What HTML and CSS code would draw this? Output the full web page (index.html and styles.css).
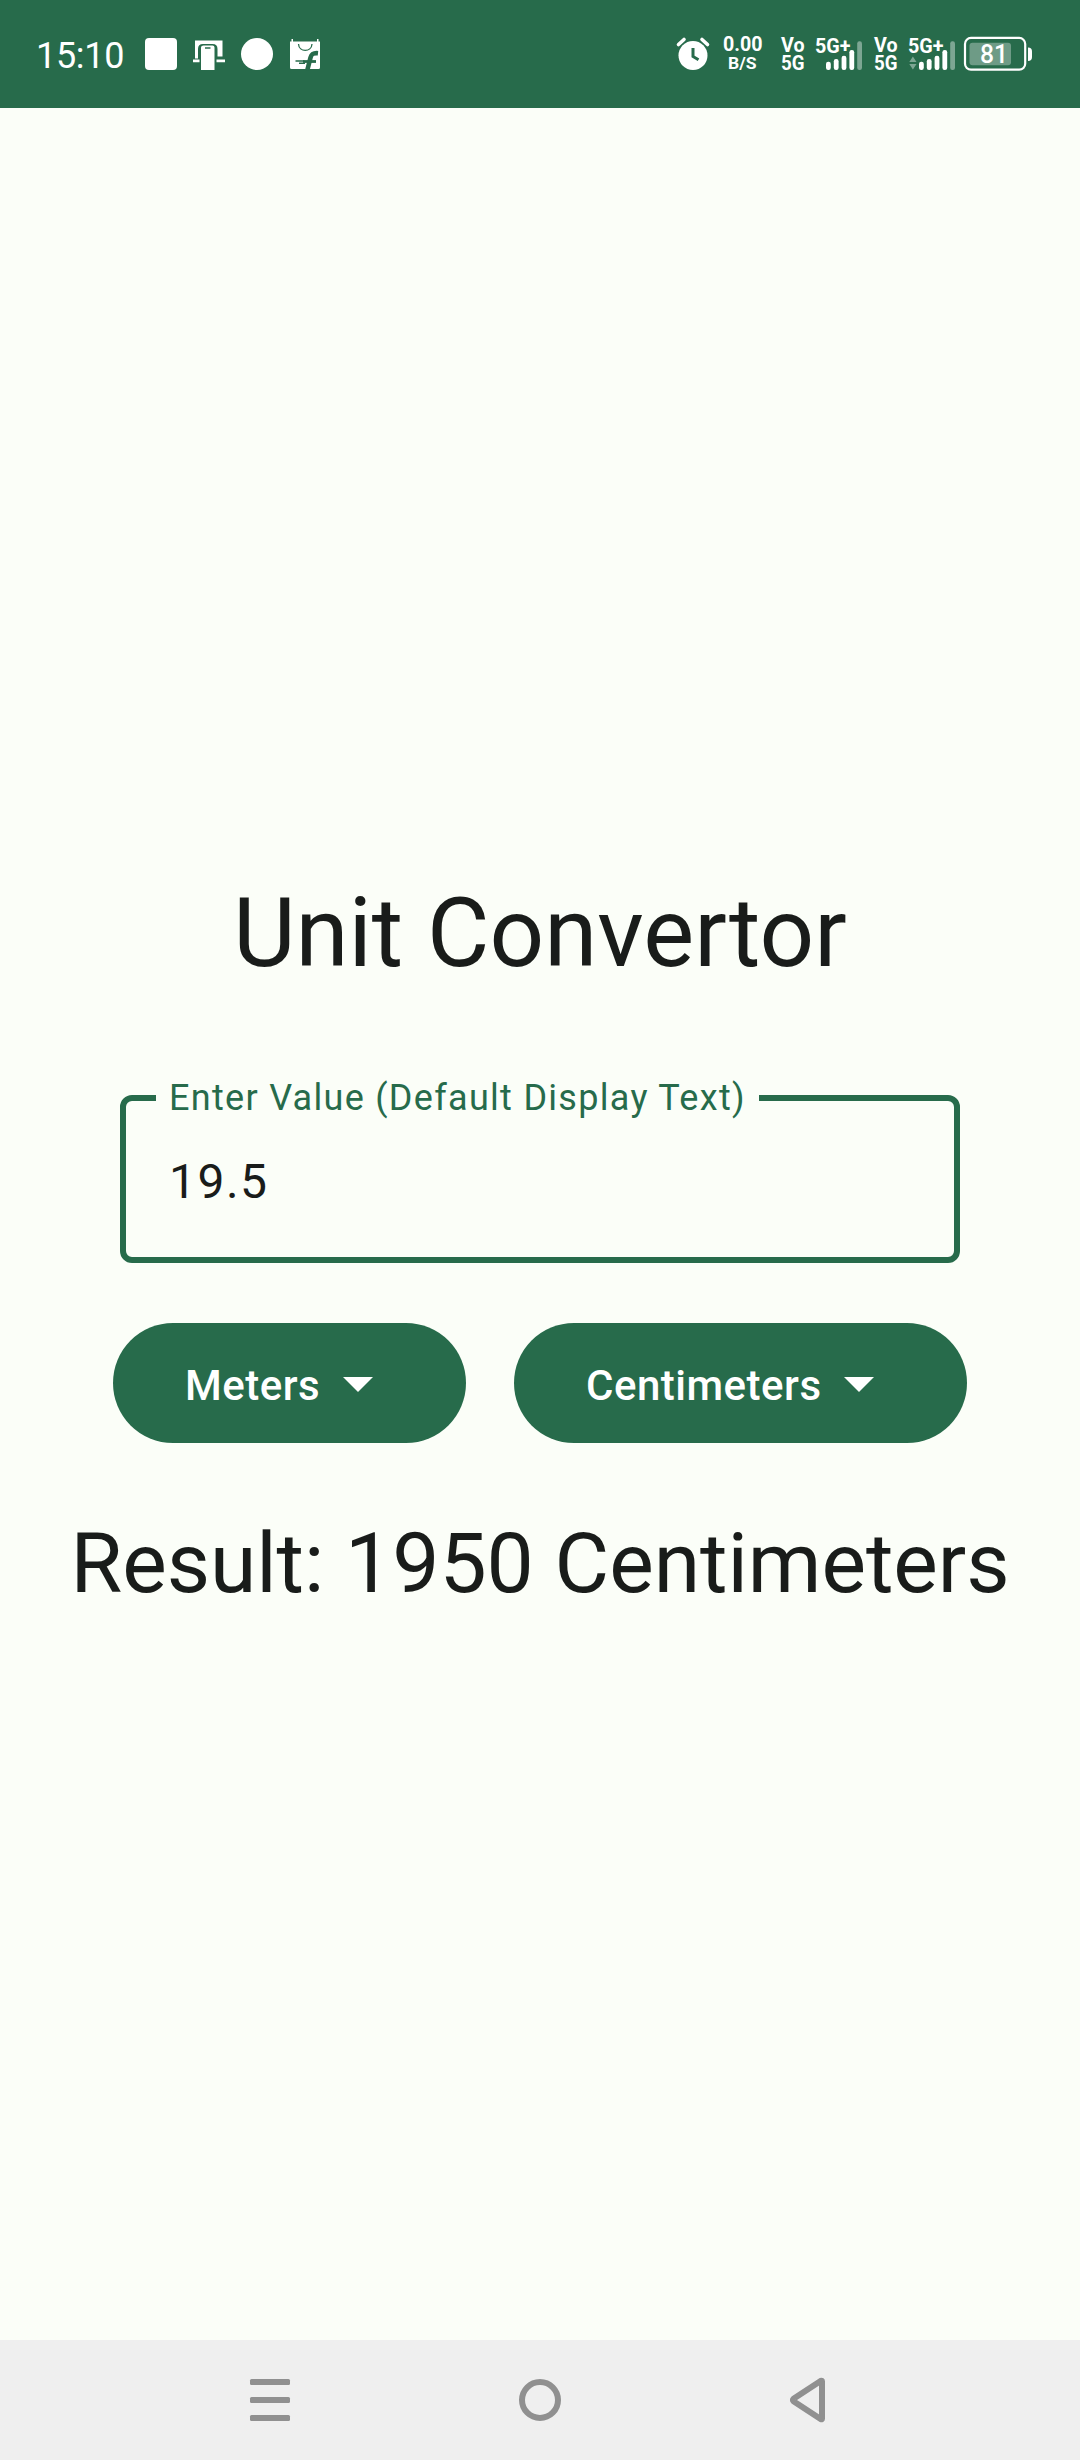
FILE: index.html
```html
<!DOCTYPE html>
<html lang="en">
<head>
<meta charset="utf-8">
<title>Unit Convertor</title>
<link rel="stylesheet" href="styles.css">
</head>
<body>
<div class="screen">
  <header class="status">
    <span class="clock">15:10</span>
    <svg class="notifications" width="176" height="36" viewBox="145 36 176 36" fill="#fff">
      <rect x="145" y="38" width="32" height="32" rx="4"/>
      <path d="M195 40.500h27.500v16h-5V49q0-5-5-5h-9.500q-5 0-5 5v9.500h-3z"/>
      <path d="M193 59.500h6.500v2.700H193zM216.500 59.500h8.500v2.700h-8.500z"/>
      <path fill-rule="evenodd" d="M203.500 45.500h9q2 0 2 2V70H201V47.500q0-2 2.500-2zM205 47.300v1.500h5.500v-1.500z"/>
      <circle cx="257" cy="54" r="16"/>
      <path d="M290 41.500h30V67.500q0 1.500-1.500 1.500h-27q-1.500 0-1.500-1.500zM291.500 39h1.500v3h-1.500zM317 39h1.500v3H317z"/>
      <g fill="none" stroke="#276b4b">
        <path stroke-width="1.300" d="M298.500 44c.5 8.500 13 8.500 13.500 0"/>
        <path stroke-width="4.600" d="M318 53.200c-5-.5-6.500 1-7.500 4.500l-3.200 12.500"/>
        <path stroke-width="2.800" d="M303 61.500h13"/>
        <path stroke-width="1.400" d="M295.500 61h9M299 63.300h6"/>
      </g>
    </svg>
    <svg class="indicators" width="358" height="36" viewBox="676 36 358 36" fill="#fff">
      <circle cx="693" cy="55.500" r="14.500"/>
      <path d="M678.500 44.500l5.500-5M702 39.500l5.500 5" stroke="#fff" stroke-width="3.600" stroke-linecap="round"/>
      <path d="M693 48v8.500l5.500 3.300" fill="none" stroke="#276b4b" stroke-width="3"/>
      <g class="cell">
        <text x="723" y="51" font-size="20.500" textLength="39.500" lengthAdjust="spacingAndGlyphs">0.00</text>
        <text x="728" y="69" font-size="17" textLength="28.500" lengthAdjust="spacingAndGlyphs">B/S</text>
        <text x="781" y="52" font-size="19.500" textLength="23.500" lengthAdjust="spacingAndGlyphs">Vo</text>
        <text x="781" y="69.700" font-size="19.500" textLength="23.500" lengthAdjust="spacingAndGlyphs">5G</text>
        <text x="815" y="53.300" font-size="20.500" textLength="35.500" lengthAdjust="spacingAndGlyphs">5G+</text>
        <text x="874" y="52" font-size="19.500" textLength="23.500" lengthAdjust="spacingAndGlyphs">Vo</text>
        <text x="874" y="69.700" font-size="19.500" textLength="23.500" lengthAdjust="spacingAndGlyphs">5G</text>
        <text x="908" y="53.300" font-size="20.500" textLength="35.500" lengthAdjust="spacingAndGlyphs">5G+</text>
      </g>
      <g id="bars">
        <rect x="826" y="61.700" width="4.800" height="8.300" rx="2.200"/>
        <rect x="833.800" y="59" width="4.800" height="11" rx="2.200"/>
        <rect x="841.600" y="55.700" width="4.800" height="14.300" rx="2.200"/>
        <rect x="849.400" y="50" width="4.800" height="20" rx="2.200"/>
        <rect x="857.200" y="41.300" width="4.800" height="28.700" rx="2.200" opacity=".4"/>
      </g>
      <use href="#bars" x="93"/>
      <path d="M909.300 62l3.600-5.500 3.600 5.500zM909.300 64h7.200l-3.600 5.500z" opacity=".4"/>
      <rect x="965" y="37.900" width="60.200" height="31.800" rx="6" fill="none" stroke="#fff" stroke-width="2.200"/>
      <rect x="969.500" y="42.700" width="41.500" height="22.500" rx="3" opacity=".33"/>
      <path d="M1028 47.500q4 0 4 4v5.500q0 4-4 4z"/>
      <text x="980" y="63" font-size="25.500" font-weight="500" textLength="28" lengthAdjust="spacingAndGlyphs">81</text>
    </svg>
  </header>

  <main class="content">
    <h1 class="title">Unit Convertor</h1>
    <fieldset class="field">
      <legend class="label">Enter Value (Default Display Text)</legend>
      <div class="value">19.5</div>
    </fieldset>
    <div class="units">
      <button class="unit">Meters
        <svg width="72" height="72" viewBox="0 0 24 24" fill="#fff"><path d="M7 10l5 5 5-5z"/></svg>
      </button>
      <button class="unit">Centimeters
        <svg width="72" height="72" viewBox="0 0 24 24" fill="#fff"><path d="M7 10l5 5 5-5z"/></svg>
      </button>
    </div>
    <p class="result">Result: 1950 Centimeters</p>
  </main>

  <nav class="navbar">
    <svg width="48" height="48" viewBox="0 0 48 48" fill="#909090">
      <rect x="4" y="3" width="40" height="6" rx="1.500"/><rect x="4" y="21" width="40" height="6" rx="1.500"/><rect x="4" y="39" width="40" height="6" rx="1.500"/>
    </svg>
    <svg width="48" height="48" viewBox="0 0 48 48" fill="none" stroke="#909090" stroke-width="6"><circle cx="24" cy="24" r="18"/></svg>
    <svg width="48" height="48" viewBox="0 0 48 48" fill="none" stroke="#909090" stroke-width="6" stroke-linejoin="round"><path d="M7.500 22.800L35 4.800q1-.5 1 .7v37q0 1.200-1 .7L7.500 25.200q-1.200-1.200 0-2.400z"/></svg>
  </nav>
</div>
</body>
</html>
```
FILE: styles.css
```css
* {
  box-sizing: border-box;
}

body {
  margin: 0;
  font-family: Roboto, "Noto Sans", sans-serif;
  color: #191c1a;
  background: #fbfef8;
}

.screen {
  display: flex;
  flex-direction: column;
  width: 1080px;
  height: 2460px;
}

.status {
  display: flex;
  justify-content: space-between;
  height: 108px;
  padding: 0 46px 0 36px;
  color: #fff;
  background: #276b4b;
}

.status svg {
  margin-top: 36px;
  overflow: visible;
}

.clock {
  width: 90px;
  font-size: 36px;
  line-height: 112px;
  letter-spacing: -0.3px;
}

.notifications {
  margin-left: 19px;
}

.indicators {
  margin-left: auto;
}

.cell {
  font-weight: 700;
}

.content {
  display: flex;
  flex: 1;
  flex-direction: column;
  align-items: center;
  padding-top: 765px;
}

.title {
  margin: 0;
  font-size: 96px;
  font-weight: 400;
  line-height: 120px;
}

.field {
  width: 840px;
  height: 189px;
  margin: 81px 0 0;
  padding: 24px 42px 0 30px;
  border: 6px solid #276b4b;
  border-radius: 12px;
}

.label {
  width: 603px;
  padding: 0 0 0 13px;
  font-size: 36px;
  line-height: 48px;
  letter-spacing: 1.3px;
  white-space: nowrap;
  color: #276b4b;
}

.value {
  padding-left: 13px;
  font-size: 48px;
  line-height: 72px;
  letter-spacing: 1.5px;
}

.units {
  display: flex;
  gap: 48px;
  margin-top: 60px;
}

.unit {
  display: flex;
  align-items: center;
  justify-content: space-between;
  height: 120px;
  min-width: 353px;
  padding: 6px 72px 0;
  border: 0;
  border-radius: 60px;
  font: 500 42px/60px Roboto, "Noto Sans", sans-serif;
  letter-spacing: 0.5px;
  color: #fff;
  background: #276b4b;
}

.unit svg {
  margin-top: -6px;
}

.unit:last-child {
  min-width: 453px;
}

.result {
  margin: 67px 0 0;
  font-size: 84px;
  line-height: 108px;
  letter-spacing: -0.05px;
}

.navbar {
  display: flex;
  align-items: center;
  justify-content: center;
  gap: 222px;
  height: 120px;
  background: #efefef;
}
```
